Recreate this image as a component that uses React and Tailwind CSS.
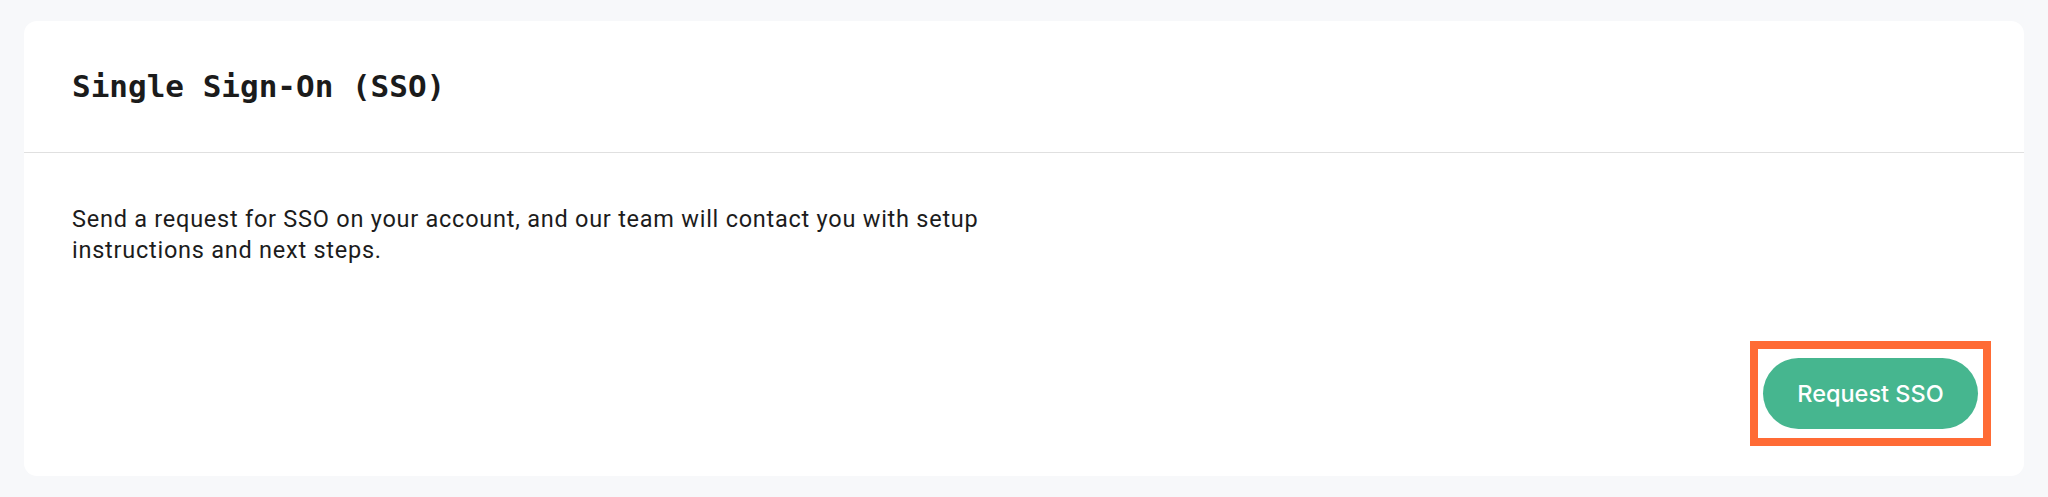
export default function App() {
  return (
    <div className="min-h-[497px] w-full bg-[#f7f8fa] px-[24px] pt-[21px] pb-[21px]">
      <div className="flex h-[455px] flex-col rounded-[13px] bg-white">
        <div className="flex h-[132px] items-center border-b border-[#e0e0e0] px-[48px]">
          <h2
            className="text-[31px] font-bold leading-none text-[#1b1b1b]"
            style={{ fontFamily: '"DejaVu Sans Mono", "Liberation Mono", monospace' }}
          >
            Single Sign-On (SSO)
          </h2>
        </div>
        <div className="flex flex-1 flex-col justify-between px-[48px] pt-[51px] pb-[30px] pr-[33px]">
          <p
            className="max-w-[1000px] text-[23.5px] leading-[31px] tracking-[0.75px] text-[#1c1c1c]"
            style={{ fontFamily: 'Roboto, "Noto Sans", sans-serif' }}
          >
            Send a request for SSO on your account, and our team will contact you with setup
            <br />
            instructions and next steps.
          </p>
          <div className="flex justify-end">
            <div className="border-[8px] border-[#ff6b35] px-[5px] py-[9px]">
              <button
                className="flex h-[71px] w-[215px] items-center justify-center rounded-full bg-[#46b68f] text-[23.5px] font-medium text-white"
                style={{ fontFamily: 'Inter, Roboto, sans-serif' }}
              >
                Request SSO
              </button>
            </div>
          </div>
        </div>
      </div>
    </div>
  );
}
